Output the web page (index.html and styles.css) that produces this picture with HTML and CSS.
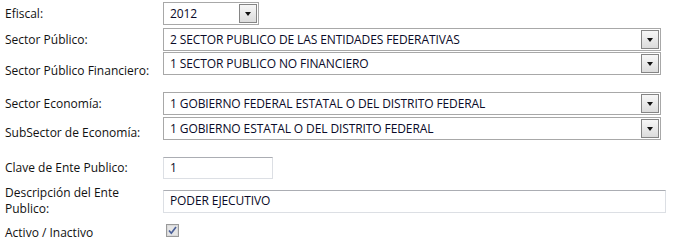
FILE: index.html
```html
<!DOCTYPE html>
<html lang="es">
<head>
<meta charset="utf-8">
<title>Ente Publico</title>
<link rel="stylesheet" href="styles.css">
</head>
<body>
<form class="form">
  <div class="row r1">
    <label class="lbl">Efiscal:</label>
    <div class="sel sel-year"><span class="val">2012</span><span class="btn"><span class="arrow"></span></span></div>
  </div>
  <div class="row r2">
    <label class="lbl">Sector Público:</label>
    <div class="sel sel-wide"><span class="val">2 SECTOR PUBLICO DE LAS ENTIDADES FEDERATIVAS</span><span class="btn"><span class="arrow"></span></span></div>
  </div>
  <div class="row r3">
    <label class="lbl lbl-low">Sector Público Financiero:</label>
    <div class="sel sel-wide"><span class="val">1 SECTOR PUBLICO NO FINANCIERO</span><span class="btn"><span class="arrow"></span></span></div>
  </div>
  <div class="row r4">
    <label class="lbl">Sector Economía:</label>
    <div class="sel sel-wide"><span class="val">1 GOBIERNO FEDERAL ESTATAL O DEL DISTRITO FEDERAL</span><span class="btn"><span class="arrow"></span></span></div>
  </div>
  <div class="row r5">
    <label class="lbl lbl-low2">SubSector de Economía:</label>
    <div class="sel sel-wide"><span class="val">1 GOBIERNO ESTATAL O DEL DISTRITO FEDERAL</span><span class="btn"><span class="arrow"></span></span></div>
  </div>
  <div class="row r6">
    <label class="lbl">Clave de Ente Publico:</label>
    <div class="txt txt-short"><span class="val">1</span></div>
  </div>
  <div class="row r7">
    <label class="lbl lbl-2">Descripción del Ente Publico:</label>
    <div class="txt txt-wide"><span class="val">PODER EJECUTIVO</span></div>
  </div>
  <div class="row r8">
    <label class="lbl">Activo / Inactivo</label>
    <span class="chk">
      <svg width="13" height="13" viewBox="0 0 13 13">
        <rect x="0.5" y="0.5" width="12" height="12" fill="#f4f4f4" stroke="#9a9a9a"/>
        <rect x="1.5" y="1.5" width="10" height="10" fill="#e6e6e6" stroke="#dadada"/>
        <path d="M3 6.5 L5.3 9.2 L10 3" fill="none" stroke="#4a5f98" stroke-width="1.7"/>
      </svg>
    </span>
  </div>
</form>
</body>
</html>
```
FILE: styles.css
```css
html, body {
  margin: 0;
  padding: 0;
  background: #ffffff;
}
body {
  font-family: "Open Sans", "Noto Sans", "DejaVu Sans", sans-serif;
  font-size: 12px;
  color: #111111;
}
.form {
  display: flex;
  flex-direction: column;
  padding: 2px 0 0 5px;
}
.row {
  display: grid;
  grid-template-columns: 158px auto;
  align-items: center;
}
.r2 { margin-top: 3px; }
.r3 { margin-top: 1px; }
.r4 { margin-top: 17px; }
.r5 { margin-top: 2px; }
.r6 { margin-top: 17px; }
.r7 { margin-top: 6px; }
.r8 { margin-top: 8px; }
.lbl {
  line-height: 16px;
  white-space: nowrap;
}
.lbl-low {
  align-self: end;
  margin-bottom: -4px;
}
.lbl-low2 {
  align-self: end;
  margin-bottom: -1px;
}
.lbl-2 {
  white-space: normal;
  width: 130px;
}
.sel {
  box-sizing: border-box;
  height: 23px;
  border: 1px solid #a8a8a8;
  background: #fff;
  display: flex;
  align-items: center;
  justify-content: space-between;
  padding: 0 1px 0 6px;
  color: #0a0a28;
  letter-spacing: -0.1px;
}
.sel-year { width: 96px; }
.sel-wide { width: 498px; }
.val {
  line-height: 16px;
  white-space: nowrap;
}
.btn {
  box-sizing: border-box;
  width: 18px;
  height: 19px;
  border: 1px solid #858585;
  background: linear-gradient(#f7f7f7, #dcdcdc);
  display: flex;
  align-items: center;
  justify-content: center;
}
.arrow {
  width: 0;
  height: 0;
  border-left: 3.5px solid transparent;
  border-right: 3.5px solid transparent;
  border-top: 4px solid #111;
  margin-top: 1px;
}
.txt {
  box-sizing: border-box;
  height: 22px;
  border: 1px solid #dcdfe4;
  border-top-color: #abadb3;
  background: #fff;
  display: flex;
  align-items: center;
  padding: 0 6px;
  color: #0a0a28;
  letter-spacing: -0.1px;
}
.txt-short { width: 110px; }
.txt-wide { width: 503px; height: 23px; }
.chk {
  display: flex;
  padding-left: 3px;
  margin-top: -5px;
}
.chk svg { display: block; }
```
